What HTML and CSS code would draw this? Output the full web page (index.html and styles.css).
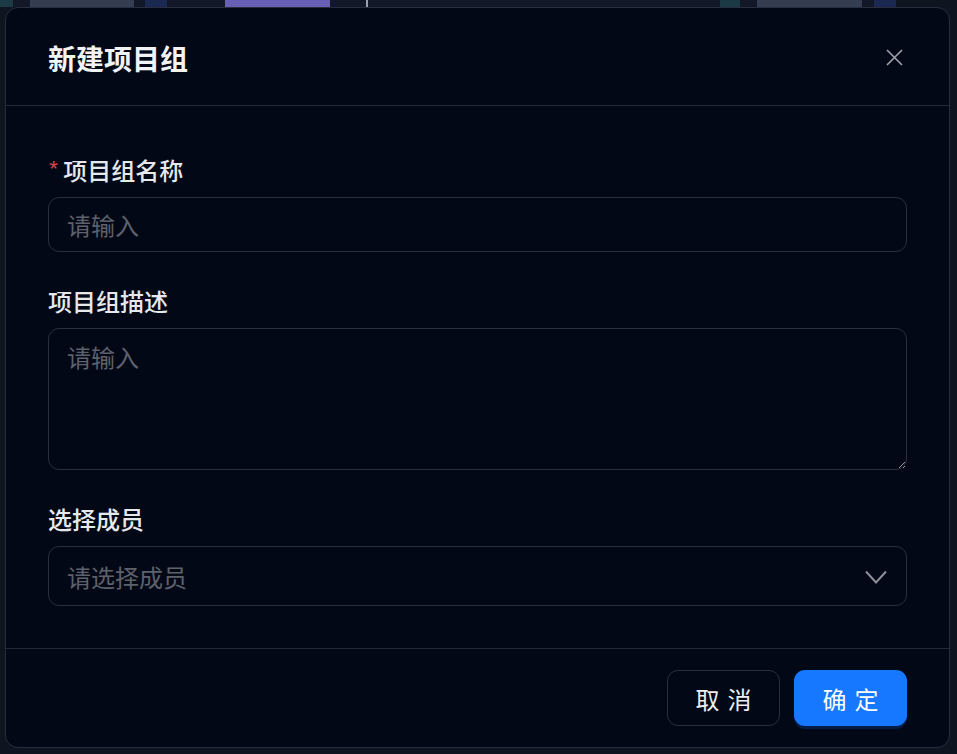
FILE: index.html
```html
<!DOCTYPE html>
<html lang="zh-CN">

<head>
  <meta charset="UTF-8">
  <meta name="viewport" content="width=device-width, initial-scale=1.0">
  <title>新建项目组</title>
  <link rel="stylesheet" href="styles.css">
</head>

<body>
  <!-- 背景页面（被遮罩） -->
  <div class="backdrop">
    <div class="thumb-row">
      <span class="thumb t-teal"></span>
      <span class="thumb t-dark w17"></span>
      <span class="thumb t-gray w104"></span>
      <span class="thumb t-dark w11"></span>
      <span class="thumb t-navy w22"></span>
      <span class="thumb t-dark w58"></span>
      <span class="thumb t-purple w105"></span>
      <span class="thumb t-dark w36"></span>
      <span class="thumb t-light w2"></span>
      <span class="thumb t-dark w352"></span>
      <span class="thumb t-teal w20"></span>
      <span class="thumb t-dark w17"></span>
      <span class="thumb t-gray w105"></span>
      <span class="thumb t-dark w12"></span>
      <span class="thumb t-navy w22"></span>
    </div>
  </div>

  <div class="modal">
    <div class="modal-header">
      <h2 class="modal-title">新建项目组</h2>
      <button class="modal-close" aria-label="关闭">
        <svg width="17" height="17" viewBox="0 0 17 17">
          <path d="M1 1 L16 16 M16 1 L1 16" stroke="#9ea2ab" stroke-width="1.6" fill="none" />
        </svg>
      </button>
    </div>

    <div class="modal-body">
      <div class="form-item">
        <label class="form-label"><span class="required">*</span>项目组名称</label>
        <input type="text" class="form-input" placeholder="请输入">
      </div>

      <div class="form-item">
        <label class="form-label">项目组描述</label>
        <textarea class="form-textarea" placeholder="请输入"></textarea>
      </div>

      <div class="form-item">
        <label class="form-label">选择成员</label>
        <div class="form-select">
          <span class="select-placeholder">请选择成员</span>
          <svg class="select-arrow" width="22" height="14" viewBox="0 0 22 14">
            <path d="M1 1.5 L11 12.5 L21 1.5" stroke="#8b8f98" stroke-width="2" fill="none" />
          </svg>
        </div>
      </div>
    </div>

    <div class="modal-footer">
      <button class="btn btn-default">取消</button>
      <button class="btn btn-primary">确定</button>
    </div>
  </div>
</body>

</html>
```

FILE: styles.css
```css
body {
  margin: 0;
  height: 754px;
  overflow: hidden;
  background-color: #0f1422;
  font-family: "Noto Sans CJK SC", "Noto Sans", sans-serif;
  color: #dcdee2;
}

/* 背景 */
.backdrop {
  height: 100%;
  background-color: #0f1421;
}

.thumb-row {
  display: flex;
  height: 7px;
}

.thumb {
  display: block;
  height: 7px;
  flex-shrink: 0;
}

.t-teal { width: 13px; background: #1b3a46; }
.t-dark { background: #121827; }
.t-gray { background: #343d52; }
.t-navy { background: #1a2852; }
.t-purple { background: #6a5fb7; }
.t-light { background: #9aa0b0; }

.w2 { width: 2px; }
.w11 { width: 11px; }
.w12 { width: 12px; }
.w17 { width: 17px; }
.w20 { width: 20px; }
.w22 { width: 22px; }
.w36 { width: 36px; }
.w58 { width: 58px; }
.w104 { width: 104px; }
.w105 { width: 105px; }
.w352 { width: 352px; }

/* 弹窗 */
.modal {
  position: absolute;
  top: 7px;
  left: 5px;
  width: 943px;
  height: 739px;
  background-color: #030817;
  border: 1px solid #282e3f;
  border-radius: 13px;
  display: flex;
  flex-direction: column;
}

.modal-header {
  height: 98px;
  border-bottom: 1px solid #252a3a;
  display: flex;
  align-items: center;
  justify-content: space-between;
  padding: 0 46px 0 42px;
  box-sizing: border-box;
  flex-shrink: 0;
}

.modal-title {
  margin: 0;
  font-size: 28px;
  line-height: 36px;
  font-weight: 700;
  color: #f2f3f5;
  padding-top: 2px;
}

.modal-close {
  background: none;
  border: none;
  padding: 0;
  width: 17px;
  height: 17px;
  cursor: pointer;
  display: flex;
  margin-top: 1px;
}

.modal-body {
  flex: 1;
  padding: 48px 42px 0;
  display: flex;
  flex-direction: column;
  gap: 33px;
}

.form-item {
  display: flex;
  flex-direction: column;
  gap: 11px;
}

.form-label {
  display: flex;
  align-items: center;
  height: 32px;
  font-size: 24px;
  line-height: 32px;
  font-weight: 500;
  color: #e6e8eb;
}

.required {
  color: #d9464b;
  font-family: "Liberation Mono", monospace;
  font-size: 22px;
  line-height: 1;
  margin-right: 3px;
  margin-left: -1px;
  padding-top: 3px;
}

.form-input,
.form-textarea,
.form-select {
  box-sizing: border-box;
  width: 100%;
  background: transparent;
  border: 1px solid #2a2f3d;
  border-radius: 11px;
  font-family: inherit;
  font-size: 24px;
  color: #e3e5e8;
  padding: 0 18px;
  outline: none;
}

.form-input {
  height: 55px;
}

.form-textarea {
  height: 142px;
  padding-top: 12px;
  line-height: 32px;
  resize: vertical;
  color-scheme: dark;
}

.form-input::placeholder,
.form-textarea::placeholder {
  color: #5d616b;
}

.form-select {
  height: 60px;
  display: flex;
  align-items: center;
  justify-content: space-between;
  padding-right: 19px;
}

.select-placeholder {
  color: #5d616b;
}

.select-arrow {
  margin-top: 2px;
}

/* 底部按钮 */
.modal-footer {
  height: 99px;
  border-top: 1px solid #252a3a;
  box-sizing: border-box;
  display: flex;
  justify-content: flex-end;
  align-items: flex-start;
  gap: 14px;
  padding: 21px 42px 0;
  flex-shrink: 0;
}

.btn {
  width: 113px;
  height: 56px;
  border-radius: 11px;
  font-family: inherit;
  font-size: 24px;
  letter-spacing: 8px;
  text-indent: 8px;
  cursor: pointer;
}

.btn-default {
  background: transparent;
  border: 1px solid #2a2f3d;
  color: #eceef1;
}

.btn-primary {
  background-color: #1677ff;
  border: none;
  color: #fff;
  box-shadow: 0 3px 0 rgba(5, 90, 220, 0.25);
}
```
